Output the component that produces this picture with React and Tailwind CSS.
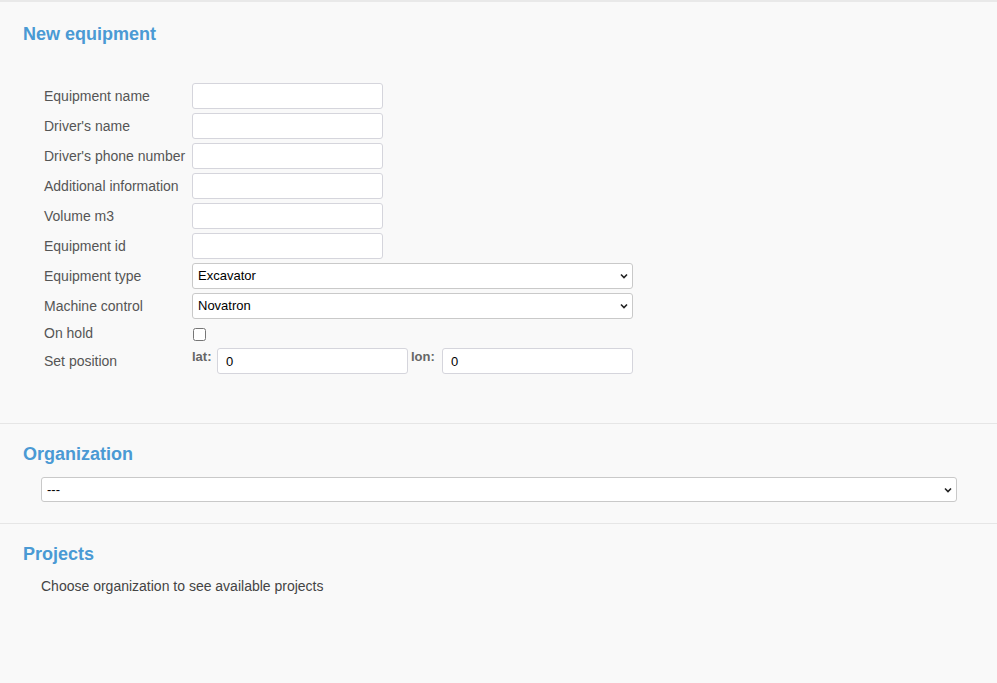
import React from 'react';

const font = { fontFamily: '"Liberation Sans", Arial, sans-serif' };

const textFields = [
  'Equipment name',
  "Driver's name",
  "Driver's phone number",
  'Additional information',
  'Volume m3',
  'Equipment id',
];

function Label({ children }) {
  return <div className="text-[14px] leading-[16px] text-[#555] whitespace-nowrap">{children}</div>;
}

function SelectBox({ value, options, className = '' }) {
  return (
    <div className={`relative ${className}`}>
      <select
        defaultValue={value}
        className="appearance-none w-full h-full bg-white border border-[#c9c9c9] rounded-[3px] pl-[5px] pr-[20px] text-[13px] text-black"
      >
        {options.map(o => <option key={o}>{o}</option>)}
      </select>
      <svg className="absolute right-[5px] top-1/2 -translate-y-1/2 pointer-events-none" width="8" height="6" viewBox="0 0 8 6">
        <path d="M1 1.5 L4 4.5 L7 1.5" fill="none" stroke="#222" strokeWidth="1.6" />
      </svg>
    </div>
  );
}

export default function App() {
  return (
    <div className="min-h-[683px] bg-[#f9f9f9] border-t-2 border-[#e9e9e9]" style={font}>
      {/* New equipment */}
      <section className="px-[23px] pt-[22px] pb-[49px] border-b border-[#e6e6e6]">
        <h2 className="text-[18px] leading-[20px] font-bold text-[#4a9ad4]">New equipment</h2>
        <div className="mt-[39px] ml-[21px] grid grid-cols-[148px_auto] gap-y-[4px] items-center">
          {textFields.map(f => (
            <React.Fragment key={f}>
              <Label>{f}</Label>
              <input className="w-[191px] h-[26px] bg-white border border-[#d5d5dc] rounded-[3px] px-[6px] text-[13px]" />
            </React.Fragment>
          ))}
          <Label>Equipment type</Label>
          <SelectBox value="Excavator" options={['Excavator', 'Dumper', 'Roller']} className="w-[441px] h-[26px]" />
          <Label>Machine control</Label>
          <SelectBox value="Novatron" options={['Novatron', 'Trimble', 'Leica']} className="w-[441px] h-[26px]" />
          <div className="self-start pt-[2px]"><Label>On hold</Label></div>
          <div className="h-[21px] flex items-start pt-[5px]">
            <input type="checkbox" className="w-[13px] h-[13px] m-0 ml-[1px] accent-[#777]" />
          </div>
          <div className="self-end pb-[5px]"><Label>Set position</Label></div>
          <div className="flex items-start">
            <span className="text-[13px] leading-[15px] font-bold text-[#666] w-[25px] pt-[1px]">lat:</span>
            <input defaultValue="0" className="w-[191px] h-[26px] bg-white border border-[#d5d5dc] rounded-[3px] px-[8px] text-[13px] text-black" />
            <span className="text-[13px] leading-[15px] font-bold text-[#666] ml-[3px] w-[31px] pt-[1px]">lon:</span>
            <input defaultValue="0" className="w-[191px] h-[26px] bg-white border border-[#d5d5dc] rounded-[3px] px-[8px] text-[13px] text-black" />
          </div>
        </div>
      </section>

      {/* Organization */}
      <section className="px-[23px] pt-[20px] pb-[21px] border-b border-[#e6e6e6]">
        <h2 className="text-[18px] leading-[20px] font-bold text-[#4a9ad4]">Organization</h2>
        <div className="mt-[13px] ml-[18px]">
          <SelectBox value="---" options={['---']} className="w-[916px] h-[25px]" />
        </div>
      </section>

      {/* Projects */}
      <section className="px-[23px] pt-[20px]">
        <h2 className="text-[18px] leading-[20px] font-bold text-[#4a9ad4]">Projects</h2>
        <p className="mt-[14px] ml-[18px] text-[14px] leading-[16px] text-[#444]">
          Choose organization to see available projects
        </p>
      </section>
    </div>
  );
}
